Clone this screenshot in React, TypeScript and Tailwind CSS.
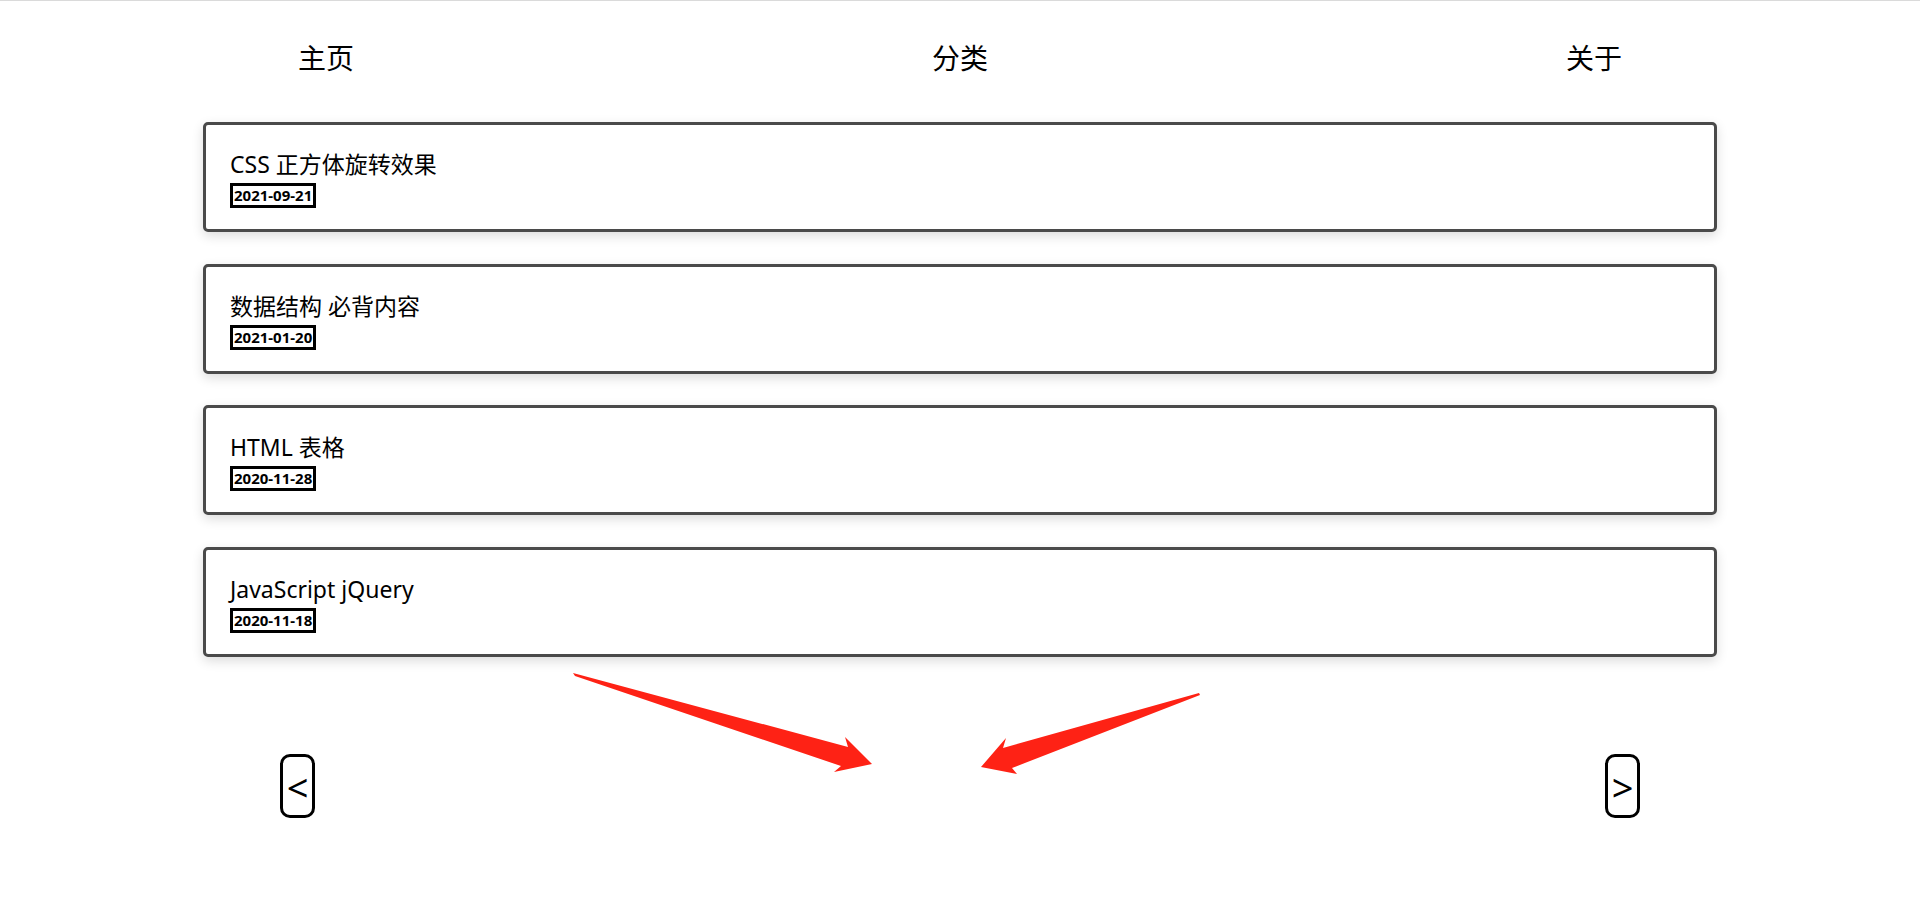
import React from "react";

const posts = [
  { title: "CSS 正方体旋转效果", date: "2021-09-21" },
  { title: "数据结构 必背内容", date: "2021-01-20" },
  { title: "HTML 表格", date: "2020-11-28" },
  { title: "JavaScript jQuery", date: "2020-11-18" },
];

const font = { fontFamily: '"Noto Sans", "Noto Sans CJK SC", sans-serif' };

function Arrows() {
  return (
    <svg
      className="absolute left-0 top-0 pointer-events-none"
      width="1920"
      height="902"
      viewBox="0 0 1920 902"
    >
      <polygon
        fill="#fe2215"
        points="573,672 848,746 845,736 872,763 834,771 841,765 575,675"
      />
      <polygon
        fill="#fe2215"
        points="1199,692 1003,747 1006,737 981,766 1017,773 1012,767 1200,694"
      />
    </svg>
  );
}

export default function App() {
  return (
    <div
      className="relative w-full h-[902px] bg-white text-black border-t border-[#dadada] overflow-hidden"
      style={font}
    >
      <nav className="w-[1902px] mx-auto h-[113px] grid grid-cols-3 items-center text-[28px]">
        <a className="text-center" href="#home">主页</a>
        <a className="text-center" href="#category">分类</a>
        <a className="text-center" href="#about">关于</a>
      </nav>

      <ul className="w-[1514px] mx-auto mt-[8px] flex flex-col gap-[31.5px]">
        {posts.map((p) => (
          <li
            key={p.date}
            className="h-[110px] border-[3px] border-[#4a4a4a] rounded-[5px] px-6 pt-[24px] shadow-[0_4px_12px_rgba(0,0,0,0.14)]"
          >
            <div className="text-[23px] leading-[30px]">{p.title}</div>
            <span className="inline-block mt-[4px] border-[3px] border-black px-[1px] text-[15px] leading-[19px] font-bold">
              {p.date}
            </span>
          </li>
        ))}
      </ul>

      <div className="w-[1360px] mx-auto mt-[97px] flex justify-between">
        <button className="w-[35px] h-[64px] border-[3px] border-black rounded-[10px] text-[38px] leading-none pt-[2px]">
          &lt;
        </button>
        <button className="w-[35px] h-[64px] border-[3px] border-black rounded-[10px] text-[38px] leading-none pt-[2px]">
          &gt;
        </button>
      </div>

      <Arrows />
    </div>
  );
}
